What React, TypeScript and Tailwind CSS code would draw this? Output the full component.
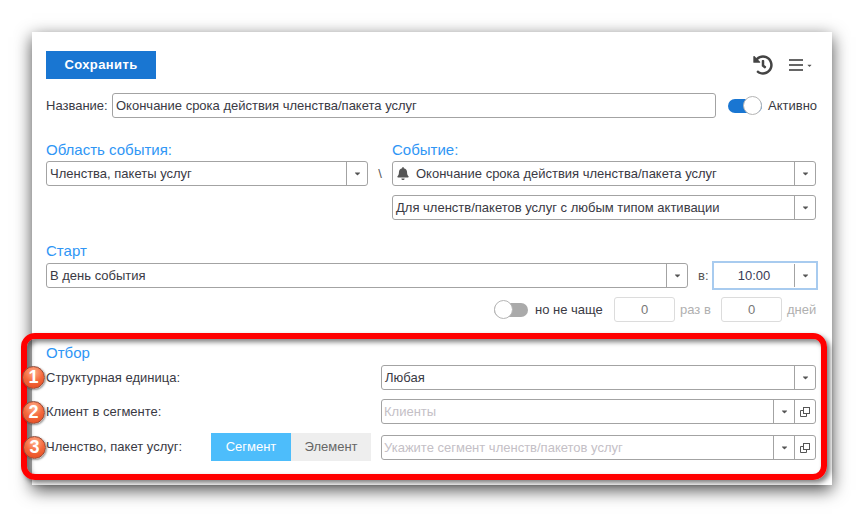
import { FaBell, FaCaretDown, FaHistory } from 'react-icons/fa';

function Caret() {
  return <FaCaretDown className="w-[9px] h-[9px] text-[#555]" />;
}

function WindowIcon() {
  return (
    <svg width="10" height="10" viewBox="0 0 10 10" fill="none" stroke="#555" strokeWidth="1">
      <rect x="3.5" y="0.5" width="6" height="6" />
      <path d="M3.5 3.5H0.5V9.5H6.5V6.5" />
    </svg>
  );
}

function MenuLines() {
  return (
    <svg width="14" height="12" viewBox="0 0 14 12" fill="#666" className="ml-[16px]">
      <rect x="0" y="0" width="14" height="2" />
      <rect x="0" y="5" width="14" height="2" />
      <rect x="0" y="10" width="14" height="2" />
    </svg>
  );
}

function Select(props: {
  value: string;
  className: string;
  placeholder?: boolean;
  bell?: boolean;
  openButton?: boolean;
}) {
  return (
    <div className={`flex h-[25px] border border-[#a3a3a3] rounded-[3px] bg-white ${props.className}`}>
      <div
        className={`flex-1 min-w-0 flex items-center gap-[7px] whitespace-nowrap overflow-hidden ${
          props.placeholder ? 'pl-[2px] text-[#c4c0c6]' : 'pl-[3px] text-[#3a3a44]'
        }`}
      >
        {props.bell && <FaBell className="w-[12px] h-[13px] ml-[1px] text-[#555]" />}
        {props.value}
      </div>
      <div className="w-[21px] border-l border-[#a3a3a3] flex items-center justify-center">
        <Caret />
      </div>
      {props.openButton && (
        <div className="w-[21px] border-l border-[#a3a3a3] flex items-center justify-center">
          <WindowIcon />
        </div>
      )}
    </div>
  );
}

function Heading(props: { text: string; className: string }) {
  return <div className={`h-[21px] text-[15px] text-[#2f96f5] ${props.className}`}>{props.text}</div>;
}

function Badge(props: { n: number; className: string }) {
  return (
    <div
      className={`absolute w-[23px] h-[23px] rounded-full border border-[#8f4a38] bg-[radial-gradient(circle_at_50%_25%,#ffb08c_0%,#f4683c_50%,#e2471c_100%)] shadow-[1px_1px_2px_rgba(0,0,0,0.4)] flex items-center justify-center text-white text-[18px] font-bold ${props.className}`}
    >
      {props.n}
    </div>
  );
}

export default function App() {
  return (
    <div className="relative w-[864px] h-[517px] overflow-hidden bg-white font-['Liberation_Sans',sans-serif] text-[13px] text-[#3a3a44]">
      <div className="flex pt-[32px] pl-[32px]">
        <div className="w-[800px] h-[453px] px-[14px] pt-[19px] bg-white shadow-[0_5px_16px_rgba(0,0,0,0.7)]">
          {/* Top bar */}
          <div className="flex items-center h-[28px] pr-[4px]">
            <button className="w-[110px] h-[28px] bg-[#1976d2] text-white text-[13px] font-bold tracking-[0.4px]">
              Сохранить
            </button>
            <FaHistory className="ml-auto w-[20px] h-[20px] text-[#444]" />
            <MenuLines />
            <FaCaretDown className="ml-[3px] mr-[1px] w-[7px] h-[7px] text-[#555]" />
          </div>

          {/* Name */}
          <div className="flex items-center mt-[14px]">
            <span className="w-[66px]">Название:</span>
            <div className="w-[604px] h-[25px] pl-[3px] flex items-center border border-[#a3a3a3] rounded-[3px] whitespace-nowrap">
              Окончание срока действия членства/пакета услуг
            </div>
            <div className="relative ml-[12px] w-[34px] h-[14px] rounded-full bg-[#1976d2]">
              <div className="absolute right-0 top-[-3px] w-[19px] h-[19px] rounded-full bg-white border border-[#b5b5b5]" />
            </div>
            <span className="ml-[6px]">Активно</span>
          </div>

          {/* Event */}
          <div className="flex mt-[22px]">
            <div className="w-[322px]">
              <Heading text="Область события:" className="leading-[19px]" />
              <Select value="Членства, пакеты услуг" className="w-full" />
            </div>
            <div className="w-[24px] pt-[21px] h-[46px] flex items-center justify-center text-[#555]">\</div>
            <div className="w-[424px]">
              <Heading text="Событие:" className="leading-[19px]" />
              <Select value="Окончание срока действия членства/пакета услуг" bell className="w-full" />
              <Select value="Для членств/пакетов услуг с любым типом активации" className="w-full mt-[9px]" />
            </div>
          </div>

          {/* Start */}
          <Heading text="Старт" className="mt-[20px] leading-[21px]" />
          <div className="flex items-center">
            <Select value="В день события" className="w-[642px]" />
            <span className="ml-[10px] w-[14px] text-[#555]">в:</span>
            <div className="flex w-[106px] h-[29px] border-2 border-[#a8cbef]">
              <div className="flex-1 flex items-center justify-center text-[#3a3a55]">10:00</div>
              <div className="w-[22px] my-[1px] border-l border-[#a3a3a3] flex items-center justify-center">
                <Caret />
              </div>
            </div>
          </div>
          <div className="flex items-center mt-[7px] pl-[448px]">
            <div className="relative w-[34px] h-[14px] rounded-full bg-[#aaaaaa]">
              <div className="absolute left-0 top-[-3px] w-[19px] h-[19px] rounded-full bg-white border border-[#b5b5b5]" />
            </div>
            <span className="ml-[7px] w-[79px] whitespace-nowrap">но не чаще</span>
            <div className="w-[61px] h-[25px] flex items-center justify-center border border-[#dcdcdc] rounded-[3px] text-[#777]">0</div>
            <span className="ml-[5px] w-[41px] text-[#b0b0b0] whitespace-nowrap">раз в</span>
            <div className="w-[61px] h-[25px] flex items-center justify-center border border-[#dcdcdc] rounded-[3px] text-[#777]">0</div>
            <span className="ml-[5px] text-[#b0b0b0]">дней</span>
          </div>

          {/* Filter */}
          <Heading text="Отбор" className="mt-[22px] leading-[17px]" />
          <div className="flex items-center">
            <span>Структурная единица:</span>
            <Select value="Любая" className="w-[435px] ml-auto mr-[2px]" />
          </div>
          <div className="flex items-center mt-[9px]">
            <span>Клиент в сегменте:</span>
            <Select value="Клиенты" placeholder openButton className="w-[435px] ml-auto mr-[2px]" />
          </div>
          <div className="flex items-center mt-[9px]">
            <span className="w-[165px]">Членство, пакет услуг:</span>
            <div className="w-[80px] h-[28px] flex items-center justify-center bg-[#4dbdfb] text-white">Сегмент</div>
            <div className="w-[80px] h-[28px] flex items-center justify-center bg-[#eeeeee] text-[#666]">Элемент</div>
            <Select
              value="Укажите сегмент членств/пакетов услуг"
              placeholder
              openButton
              className="w-[435px] ml-auto mr-[2px] mt-[1px]"
            />
          </div>
        </div>
      </div>

      {/* Red callout */}
      <div className="absolute left-[21px] top-[333px] w-[806px] h-[147px] border-[6px] border-[#ff0000] rounded-[14px] shadow-[3px_3px_5px_rgba(0,0,0,0.5),inset_3px_3px_5px_rgba(0,0,0,0.5)]" />
      <Badge n={1} className="left-[22px] top-[366px]" />
      <Badge n={2} className="left-[22px] top-[401px]" />
      <Badge n={3} className="left-[23px] top-[436px]" />
    </div>
  );
}
